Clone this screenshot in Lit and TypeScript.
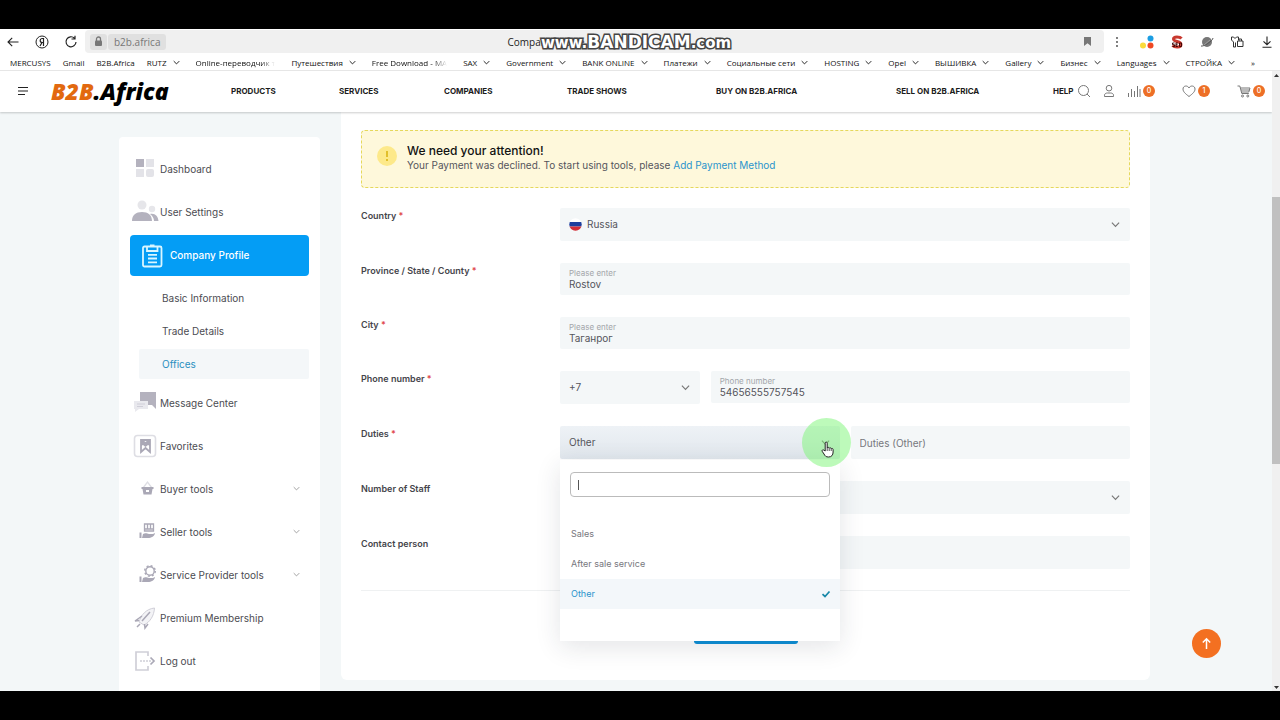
import { LitElement, html, css, svg, nothing } from "lit";
import { customElement } from "lit/decorators.js";
import { classMap } from "lit/directives/class-map.js";

const chevron = (cls: string) => html`<svg class=${cls} viewBox="0 0 10 10" aria-hidden="true">
  <path d="M1 3l4 4 4-4" fill="none" stroke="currentColor" stroke-width="1.3"></path>
</svg>`;

interface Bookmark { name: string; folder?: boolean; cut?: boolean; }

const bookmarks: Bookmark[] = [
  { name: "MERCUSYS" }, { name: "Gmail" }, { name: "B2B.Africa" }, { name: "RUTZ", folder: true },
  { name: "Online-переводчик т", cut: true }, { name: "Путешествия", folder: true },
  { name: "Free Download - MA", cut: true }, { name: "SAX", folder: true },
  { name: "Government", folder: true }, { name: "BANK ONLINE", folder: true },
  { name: "Платежи", folder: true }, { name: "Социальные сети", folder: true },
  { name: "HOSTING", folder: true }, { name: "Opel", folder: true }, { name: "ВЫШИВКА", folder: true },
  { name: "Gallery", folder: true }, { name: "Бизнес", folder: true },
  { name: "Languages", folder: true }, { name: "СТРОЙКА", folder: true }, { name: "»" },
];

@customElement("browser-bar")
export class BrowserBar extends LitElement {
  static styles = css`
    :host { display: block; flex: none; background: #fff; font-family: "Open Sans", "Noto Sans", sans-serif; color: #222; }
    .bar { display: flex; align-items: center; height: 25px; padding-right: 6px; }
    button { border: 0; background: none; padding: 0; display: grid; place-items: center; color: #222; }
    .nav { display: flex; gap: 15px; padding: 0 7px 0 6px; }
    .ico { width: 14px; height: 14px; display: block; }
    .address { position: relative; flex: 1; display: flex; align-items: center; height: 23px; background: #f0f0f0; border-radius: 4px; padding: 0 12px 0 5px; gap: 1px; }
    .chip { height: 16px; display: flex; align-items: center; background: #e0e0e0; border-radius: 3px; color: #777; font-size: 10px; padding: 0 4px; }
    .host { padding: 0 6px; }
    .title { flex: 1; font-size: 10px; padding-left: 340px; white-space: nowrap; overflow: hidden; }
    .tools { display: flex; gap: 16px; padding-left: 6px; align-items: center; }
    .stamp { position: absolute; left: 456px; top: 2px; height: 20px; display: flex; align-items: baseline; font: 700 17px/20px "DejaVu Sans", sans-serif; color: #fff; -webkit-text-stroke: 3px #444; paint-order: stroke fill; white-space: nowrap; }
    .small { font-size: 15px; }
    .marks { display: flex; align-items: center; height: 17px; padding-left: 10px; gap: 12px; font: 400 8px/17px "Open Sans", "Noto Sans", sans-serif; white-space: nowrap; border-bottom: 1px solid #e6e6e6; box-sizing: border-box; }
    .marks a { color: #111; text-decoration: none; display: flex; align-items: center; gap: 6px; }
    .marks .folder { margin-right: 4px; }
    .marks .cut { display: block; margin-right: 4px; -webkit-mask-image: linear-gradient(90deg, #000 82%, transparent); }
    .chev { width: 7px; height: 7px; }
  `;
  render() {
    return html`
      <div class="bar">
        <div class="nav">
          <button aria-label="Back"><svg class="ico" viewBox="0 0 14 14"><path d="M12.500 7H2M6.200 2.800L2 7l4.200 4.200" fill="none" stroke="#222" stroke-width="1.1"></path></svg></button>
          <button aria-label="Yandex"><svg class="ico" viewBox="0 0 14 14"><circle cx="7" cy="7" r="6" fill="none" stroke="#222"></circle><path d="M8.500 11V3.500H7.200a2 2 0 0 0 0 4h1.300M7 7.500L5 11" fill="none" stroke="#222" stroke-width="1.200"></path></svg></button>
          <button aria-label="Reload"><svg class="ico" viewBox="0 0 14 14"><path d="M10.500 3.200A5 5 0 1 0 12 7M11 .8v3.200H7.500" fill="none" stroke="#222" stroke-width="1.200"></path></svg></button>
        </div>
        <div class="address">
          <span class="chip"><svg width="9" height="11" viewBox="0 0 9 11"><path d="M2.500 5V3a2 2 0 0 1 4 0v2" fill="none" stroke="#777" stroke-width="1.300"></path><rect x="1" y="4.500" width="7" height="5.500" rx="1" fill="#777"></rect></svg></span>
          <span class="chip host">b2b.africa</span>
          <span class="title">Company Profile</span>
          <svg width="9" height="11" viewBox="0 0 9 11"><path d="M1 1h7v9L4.500 7.200 1 10z" fill="#777"></path></svg>
          <span class="stamp"><span class="small">www.</span><span>BANDICAM</span><span class="small">.com</span></span>
        </div>
        <div class="tools">
          <button aria-label="Menu"><svg class="ico" viewBox="0 0 14 14"><g fill="#444"><circle cx="7" cy="3" r=".9"></circle><circle cx="7" cy="7" r=".9"></circle><circle cx="7" cy="11" r=".9"></circle></g></svg></button>
          <button aria-label="Extensions"><svg class="ico" viewBox="0 0 14 14"><circle cx="10.500" cy="3.500" r="3" fill="#1b9de2"></circle><circle cx="3" cy="10.500" r="3" fill="#fadb3c"></circle><circle cx="10.500" cy="10.500" r="3" fill="#ef4823"></circle></svg></button>
          <button aria-label="SEO"><svg class="ico" viewBox="0 0 14 14"><path d="M11.500 3.500C10 1.500 3.500 1 3.500 4s7.500 2 7.500 5.500-6.500 3-8.500 1" fill="none" stroke="#c8392f" stroke-width="3"></path><path d="M4.500 8H2.500v1.700h2v1.800h-2M7.800 8H6v3.500h1.800M6 9.700h1.600M9.500 8h2v3.500h-2z" fill="none" stroke="#300" stroke-width=".9"></path></svg></button>
          <button aria-label="Planet"><svg class="ico" viewBox="0 0 14 14"><circle cx="7" cy="7" r="5" fill="#777"></circle><path d="M1 11C3 12 13 6 13 3" fill="none" stroke="#555"></path><path d="M4 10l6-5" stroke="#aaa" stroke-width=".8"></path></svg></button>
          <button aria-label="Collections"><svg class="ico" viewBox="0 0 14 14"><path d="M3.500 12V7L1.500 5V2h2l1.500 1.500L6.500 2h2v3M5.500 7.500V12H3.500M7.500 6h5.500v5.500H7.500zM9 6V4h2.500v2" fill="none" stroke="#333"></path></svg></button>
          <button aria-label="Downloads"><svg class="ico" viewBox="0 0 14 14"><path d="M7 1.500v8M3.500 6.300L7 9.700l3.500-3.400M2.500 12.300h9" fill="none" stroke="#222" stroke-width="1.100"></path></svg></button>
        </div>
      </div>
      <nav class="marks">
        ${bookmarks.map((b) => html`<a href="#" class=${classMap({ folder: !!b.folder, cut: !!b.cut })}>${b.name}${b.folder ? chevron("chev") : nothing}</a>`)}
      </nav>`;
  }
}

@customElement("site-header")
export class SiteHeader extends LitElement {
  static styles = css`
    :host { display: flex; flex: none; align-items: center; height: 41px; padding-bottom: 2px; box-sizing: border-box; background: #fff; box-shadow: 0 1px 2px #0003; position: relative; z-index: 3; font: 700 8px/12px Inter, sans-serif; color: #222; }
    button { border: 0; background: none; padding: 0; display: block; }
    .menu { padding: 0 22px 0 17px; }
    .menu svg { display: block; }
    .logo { width: 180px; font: italic 800 23px/24px "Open Sans", sans-serif; color: #000; text-decoration: none; }
    .logo b { color: #e2690f; font-weight: 800; }
    .nav { flex: 1; display: grid; grid-template-columns: 108fr 105fr 123fr 149fr 180fr 157fr 24fr; white-space: nowrap; }
    .nav a { color: #1c1c1c; text-decoration: none; }
    .tools { display: flex; align-items: center; padding-right: 7px; }
    .tool { display: flex; align-items: center; gap: 2px; margin-right: 11px; }
    .wide { margin-right: 27px; }
    .last { margin-right: 0; }
    .ico { width: 14px; height: 14px; fill: none; stroke: #777; display: block; }
    .count { width: 12px; height: 12px; border-radius: 50%; background: #ed6f26; color: #fff; font: 500 7px/12px Inter, sans-serif; text-align: center; }
  `;
  render() {
    return html`
      <button class="menu" aria-label="Menu"><svg width="12" height="12" viewBox="0 0 12 12"><path d="M1 2.500h10M1 6h10M1 9.500h7" stroke="#222" stroke-width="1.200"></path></svg></button>
      <a class="logo" href="#"><b>B2B</b>.Africa</a>
      <nav class="nav">
        ${["PRODUCTS", "SERVICES", "COMPANIES", "TRADE SHOWS", "BUY ON B2B.AFRICA", "SELL ON B2B.AFRICA", "HELP"].map((t) => html`<a href="#">${t}</a>`)}
      </nav>
      <div class="tools">
        <button class="tool" aria-label="Search"><svg class="ico" viewBox="0 0 14 14"><circle cx="6.500" cy="6.500" r="5"></circle><path d="M10 10l3 3"></path></svg></button>
        <button class="tool" aria-label="Account"><svg class="ico" viewBox="0 0 14 14"><circle cx="7" cy="4.200" r="2.800"></circle><path d="M2.500 12.500v-1.300c0-1.500 1.500-2.200 3-2.200h3c1.500 0 3 .7 3 2.200v1.300z"></path></svg></button>
        <button class="tool wide" aria-label="Compare"><svg class="ico" viewBox="0 0 14 14"><path d="M1.500 9v4M4.500 5v8M7.500 7v6M10.500 2v11M13 5v8"></path></svg><span class="count">0</span></button>
        <button class="tool wide" aria-label="Wishlist"><svg class="ico" viewBox="0 0 14 14"><path d="M7 12.500C3 9.500 1 7.500 1 5c0-3.500 4.700-4 6-1 1.300-3 6-2.500 6 1 0 2.500-2 4.500-6 7.500z"></path></svg><span class="count">1</span></button>
        <button class="tool last" aria-label="Cart"><svg class="ico" viewBox="0 0 14 14"><path d="M.5 2h2.300l2 7.500h7M3.300 4h9.700l-1.200 4H4.500M4 6h8.500"></path><circle cx="5.500" cy="12" r="1"></circle><circle cx="10.800" cy="12" r="1"></circle></svg><span class="count">0</span></button>
      </div>`;
  }
}

const sideIcons: Record<string, unknown> = {
  dashboard: svg`<path fill="#b4b2be" d="M6 5h8v8H6z"/><path fill="#e3e3e8" d="M16 5h8v8h-8zM6 15h8v8H6z"/><rect x="16" y="15" width="8" height="8" rx="2" fill="#e3e3e8"/>`,
  users: svg`<circle cx="12" cy="8" r="4.500" fill="#e6e6ea"/><circle cx="22" cy="12" r="3.200" fill="#e6e6ea"/><path fill="#b4b2be" d="M2 24c0-6 4-9 10-9s10 3 10 9zM20 17c5-1 8 2 8.500 7H24c0-3-1.500-5-4-7z"/>`,
  company: svg`<g fill="none" stroke="#d9f6ff" stroke-width="1.800"><rect x="6" y="6.500" width="18.500" height="20" rx="1.500"/><path d="M10 7v4h10.500V7M13 5.500h4.500M11 14.800h9M11 18.500h9M11 22.300h9"/></g>`,
  message: svg`<path fill="#b4b2be" d="M10 4h16v17l-4-4H10z"/><path fill="#e9e9ee" d="M4 13h14v8H9l-4 3v-3H4z"/><path d="M7 16h8M7 18.500h6" stroke="#cfced8"/>`,
  favorites: svg`<rect x="4.500" y="4.500" width="21" height="21" rx="3" fill="none" stroke="#dedee4" stroke-width="1.600"/><path d="M11 9h9v12l-4.500-4-4.500 4z" fill="#fff" stroke="#aaa8b6" stroke-width="1.800"/><path fill="#aaa8b6" d="M11 9h2l2.500 2 2.500-2h2v6l-2-1-2.500 2-2.500-2-2 1z"/>`,
  buyer: svg`<path d="M13 14l4.500-6 4.500 6" fill="none" stroke="#dedee4" stroke-width="1.300"/><path fill="#aaa8b6" d="M11.500 13h12v2h-1l-1 5.500h-8L12.500 15h-1z"/><path d="M16 16h3v2h-3z" fill="#fff"/>`,
  seller: svg`<path d="M14.500 7h9v7h-9zM17.500 7v5M20.500 7v5M14 12h10" fill="none" stroke="#aaa8b6" stroke-width="1.300"/><path fill="#aaa8b6" d="M13 17c3-1.500 4 0 6 0h4l2-1c0 3-4 5-7 5h-6zM9.500 15.500h2V21h-2z"/>`,
  service: svg`<circle cx="20" cy="11" r="4.200" fill="none" stroke="#aaa8b6" stroke-width="1.400"/><circle cx="20" cy="11" r="5.300" fill="none" stroke="#aaa8b6" stroke-width="1.400" stroke-dasharray="2 2.160"/><path fill="#aaa8b6" d="M13 18c3-1.500 4 0 6 0h4l2-1c0 3-4 5-7 5h-6zM9.500 16.500h2V22h-2z"/>`,
  premium: svg`<path d="M24.500 5C16 6 11 12 9 19l5 3c6-3 10-9 10.500-17z" fill="#f3f3f6" stroke="#d0cfd8"/><path d="M12 13l-7 5 4-.5M18 21l-3 4-.5-4M12 18l8-9M7 24l3-3" fill="none" stroke="#aaa8b6" stroke-width="1.500"/>`,
  logout: svg`<path d="M18 10V6H6v18h12v-4" fill="none" stroke="#d0cfd8" stroke-width="1.700"/><path d="M10 15h11" stroke="#d0cfd8" stroke-width="1.400" stroke-dasharray="2 1"/><path d="M20.500 11.500L24 15l-3.500 3.500" fill="none" stroke="#aaa8b6" stroke-width="1.700"/>`,
};

@customElement("side-menu")
export class SideMenu extends LitElement {
  static styles = css`
    :host { display: block; background: #fff; border-radius: 4px 4px 0 0; padding: 11px 11px 0; margin-top: 25px; box-sizing: border-box; font: 400 10px/14px Inter, sans-serif; }
    a { color: #4c4c52; text-decoration: none; display: flex; align-items: center; white-space: nowrap; }
    .row { height: 43px; padding: 0 9px 2px 0; box-sizing: border-box; }
    .row span { flex: 1; }
    .ico { width: 30px; height: 30px; flex: none; }
    .on { height: 41px; margin: 1px 0; background: #049df5; color: #fff; border-radius: 4px; padding-left: 7px; gap: 3px; font-weight: 500; }
    .subs { display: grid; gap: 3px; padding: 6px 0 3px 9px; }
    .sub { height: 30px; padding-left: 23px; border-radius: 2px; }
    .pick { background: #f4f7f9; color: #2a8fc0; }
    .chev { width: 7px; height: 7px; color: #999; }
  `;
  row(icon: string, text: string, more = false, on = false) {
    return html`<a href="#" class=${classMap({ row: true, on })}><svg class="ico" viewBox="0 0 30 30">${sideIcons[icon]}</svg><span>${text}</span>${more ? chevron("chev") : nothing}</a>`;
  }
  render() {
    return html`
      ${this.row("dashboard", "Dashboard")}
      ${this.row("users", "User Settings")}
      ${this.row("company", "Company Profile", false, true)}
      <div class="subs">
        <a class="sub" href="#">Basic Information</a>
        <a class="sub" href="#">Trade Details</a>
        <a class="sub pick" href="#">Offices</a>
      </div>
      ${this.row("message", "Message Center")}
      ${this.row("favorites", "Favorites")}
      ${this.row("buyer", "Buyer tools", true)}
      ${this.row("seller", "Seller tools", true)}
      ${this.row("service", "Service Provider tools", true)}
      ${this.row("premium", "Premium Membership")}
      ${this.row("logout", "Log out")}`;
  }
}

@customElement("office-form")
export class OfficeForm extends LitElement {
  static styles = css`
    :host { display: block; align-self: start; background: #fff; padding: 18px 20px 36px; border-radius: 0 0 6px 6px; box-sizing: border-box; font: 400 10px/14px Inter, sans-serif; color: #55555c; }
    .alert { display: flex; align-items: flex-start; gap: 10px; height: 58px; box-sizing: border-box; padding: 12px 15px; background: #fef8db; border: 1px dashed #e5d85c; border-radius: 4px; margin-bottom: 20px; }
    .mark { width: 20px; height: 20px; margin-top: 3px; }
    .alert h2 { margin: 0; font: 500 12px/16px Inter, sans-serif; color: #111; }
    .alert p { margin: 0; line-height: 13px; }
    .alert a { color: #2a94cc; text-decoration: none; }
    .rows { display: grid; gap: 22px; }
    .row { display: grid; grid-template-columns: 199px minmax(0, 1fr); align-items: start; }
    .name { font-weight: 600; font-size: 9px; line-height: 16px; color: #45454b; }
    .name i { color: #e0474c; font-style: normal; }
    .pair { display: grid; gap: 11px; grid-template-columns: 1fr 1fr; }
    .phone { grid-template-columns: 1fr 3fr; }
    .field { position: relative; display: flex; align-items: center; height: 33px; background: #f4f7f8; border-radius: 2px; padding: 0 9px; box-sizing: border-box; gap: 5px; min-width: 0; }
    .stack { height: 32px; flex-direction: column; align-items: stretch; justify-content: center; gap: 0; padding-top: 1px; }
    .hint { font-size: 8px; line-height: 9px; color: #a3a6aa; }
    input, select, button { font: inherit; color: inherit; border: 0; background: none; padding: 0; margin: 0; outline: 0; min-width: 0; }
    input::placeholder { color: #77777d; opacity: 1; }
    .field input { line-height: 12px; height: 12px; width: 100%; }
    select { appearance: none; flex: 1; height: 33px; padding-bottom: 2px; }
    .flag { width: 13px; height: 13px; }
    .chev { width: 9px; height: 9px; margin-right: 1px; color: #777; flex: none; }
    .open { background: linear-gradient(#eef2f6, #e1e7ed); }
    .trigger { flex: 1; height: 33px; text-align: left; padding-bottom: 2px; }
    .popup { position: absolute; z-index: 2; left: 0; right: 0; top: 34px; background: #fff; box-shadow: 0 6px 24px #1f2d3d1f; padding: 12px 0 32px; }
    .search { display: flex; align-items: center; height: 25px; margin: 0 10px 22px; border: 1px solid #bbb; border-radius: 4px; box-sizing: border-box; padding: 0 7px; }
    .caret { width: 1px; height: 10px; background: #555; }
    .options { list-style: none; margin: 0; padding: 0; }
    .options li { display: flex; justify-content: space-between; align-items: center; height: 30px; padding: 0 9px 0 11px; font-size: 9px; color: #77777d; }
    .options .chosen { background: #f3f7fa; color: #2a94cc; }
    .tick { width: 10px; height: 10px; }
    .halo { position: absolute; z-index: 4; right: -11px; top: -8px; width: 49px; height: 49px; border-radius: 50%; background: #7cf57680; pointer-events: none; }
    .hand { position: absolute; z-index: 5; right: 5px; top: 15px; width: 14px; height: 17px; pointer-events: none; }
    .foot { border-top: 1px solid #eff1f2; margin-top: 21px; padding-top: 20px; display: flex; justify-content: center; }
    .save { width: 104px; height: 33px; border-radius: 3px; background: #0c8fd6; color: #fff; font-weight: 600; }
  `;
  name(id: string, text: string, required = true) {
    return html`<label class="name" for=${id}>${text}${required ? html` <i>*</i>` : nothing}</label>`;
  }
  render() {
    return html`
      <div class="alert" role="alert">
        <svg class="mark" viewBox="0 0 20 20"><circle cx="10" cy="10" r="10" fill="#fde98a"></circle><path d="M10 5v6M10 13v2" stroke="#dcb81c" stroke-width="1.700"></path></svg>
        <div><h2>We need your attention!</h2><p>Your Payment was declined. To start using tools, please <a href="#">Add Payment Method</a></p></div>
      </div>
      <form>
        <div class="rows">
          <div class="row">${this.name("country", "Country")}
            <div class="field">
              <svg class="flag" viewBox="0 0 13 13"><clipPath id="c"><circle cx="6.500" cy="6.500" r="6.200"></circle></clipPath><g clip-path="url(#c)"><path fill="#fff" d="M0 0h13v4H0z"></path><path fill="#1d3f9e" d="M0 4h13v4.500H0z"></path><path fill="#d32f38" d="M0 8.500h13V13H0z"></path></g></svg>
              <select id="country"><option>Russia</option></select>${chevron("chev")}
            </div>
          </div>
          <div class="row">${this.name("state", "Province / State / County")}
            <div class="field stack"><span class="hint">Please enter</span><input id="state" value="Rostov"></div>
          </div>
          <div class="row">${this.name("city", "City")}
            <div class="field stack"><span class="hint">Please enter</span><input id="city" value="Таганрог"></div>
          </div>
          <div class="row">${this.name("phone", "Phone number")}
            <div class="pair phone">
              <div class="field"><select aria-label="Country code"><option>+7</option></select>${chevron("chev")}</div>
              <div class="field stack"><span class="hint">Phone number</span><input id="phone" value="54656555757545"></div>
            </div>
          </div>
          <div class="row">${this.name("duties", "Duties")}
            <div class="pair">
              <div class="field open">
                <button class="trigger" id="duties" type="button" aria-haspopup="listbox" aria-expanded="true">Other</button>${chevron("chev")}
                <div class="popup">
                  <div class="search"><span class="caret"></span><input aria-label="Search duties"></div>
                  <ul class="options" role="listbox">
                    <li role="option">Sales</li>
                    <li role="option">After sale service</li>
                    <li role="option" class="chosen" aria-selected="true">Other<svg class="tick" viewBox="0 0 10 10"><path d="M1.500 5.200L4 7.500 8.500 2.500" fill="none" stroke="#1788a8" stroke-width="1.700"></path></svg></li>
                  </ul>
                </div>
                <span class="halo"></span>
                <svg class="hand" viewBox="0 0 14 17"><path d="M4.200 10V2.200c0-1.600 2-1.600 2 0V7c.2-1 1.900-.9 2 .3.300-.9 1.900-.7 2 .5.400-.8 1.900-.5 1.900.8V11c0 3-1.500 5-4.600 5-2.500 0-3.500-1-4.500-3L1.200 10.300c-.6-1.300.9-2 1.700-1.100z" fill="#fff" stroke="#222"></path><path d="M6.200 7v3M8.200 7.500V10M10.200 8v2" stroke="#222" stroke-width=".8"></path></svg>
              </div>
              <div class="field"><input aria-label="Duties (Other)" placeholder="Duties (Other)"></div>
            </div>
          </div>
          <div class="row">${this.name("staff", "Number of Staff", false)}
            <div class="field"><select id="staff"><option></option></select>${chevron("chev")}</div>
          </div>
          <div class="row">${this.name("person", "Contact person", false)}
            <div class="field"><input id="person"></div>
          </div>
        </div>
        <div class="foot"><button class="save" type="button" aria-label="Save"></button></div>
      </form>`;
  }
}

@customElement("app-root")
export class AppRoot extends LitElement {
  static styles = css`
    :host { display: flex; flex-direction: column; height: 100vh; box-sizing: border-box; padding: 29px 0; background: #000; }
    .view { flex: 1; min-height: 0; display: flex; background: #f3f7f8; }
    .page { position: relative; flex: 1; min-width: 0; display: flex; flex-direction: column; overflow: hidden; }
    .body { flex: 1; min-height: 0; display: grid; grid-template-columns: 201px minmax(0, 1fr); gap: 21px; padding: 0 122px 0 119px; }
    .up { position: absolute; right: 51px; bottom: 33px; width: 29px; height: 29px; border: 0; border-radius: 50%; background: #f37021; padding: 0; display: grid; place-items: center; }
    .scroll { width: 8px; flex: none; background: #f0f0f0; display: flex; flex-direction: column; }
    .arrow { height: 8px; display: block; }
    .before { flex: 118; }
    .thumb { flex: 267; background: #c0c0c0; }
    .after { flex: 219; }
  `;
  render() {
    return html`
      <browser-bar></browser-bar>
      <div class="view">
        <div class="page">
          <site-header></site-header>
          <main class="body"><side-menu></side-menu><office-form></office-form></main>
          <button class="up" aria-label="Back to top"><svg width="13" height="13" viewBox="0 0 13 13"><path d="M6.500 12V2M2.800 5.500l3.700-3.700 3.700 3.700" fill="none" stroke="#fff" stroke-width="1.500"></path></svg></button>
        </div>
        <div class="scroll" aria-hidden="true">
          <svg class="arrow" viewBox="0 0 8 8"><path d="M2 6l2.500-3L7 6z" fill="#333"></path></svg>
          <span class="before"></span><span class="thumb"></span><span class="after"></span>
          <svg class="arrow" viewBox="0 0 8 8"><path d="M2 3l2.500 3L7 3z" fill="#333"></path></svg>
        </div>
      </div>`;
  }
}
